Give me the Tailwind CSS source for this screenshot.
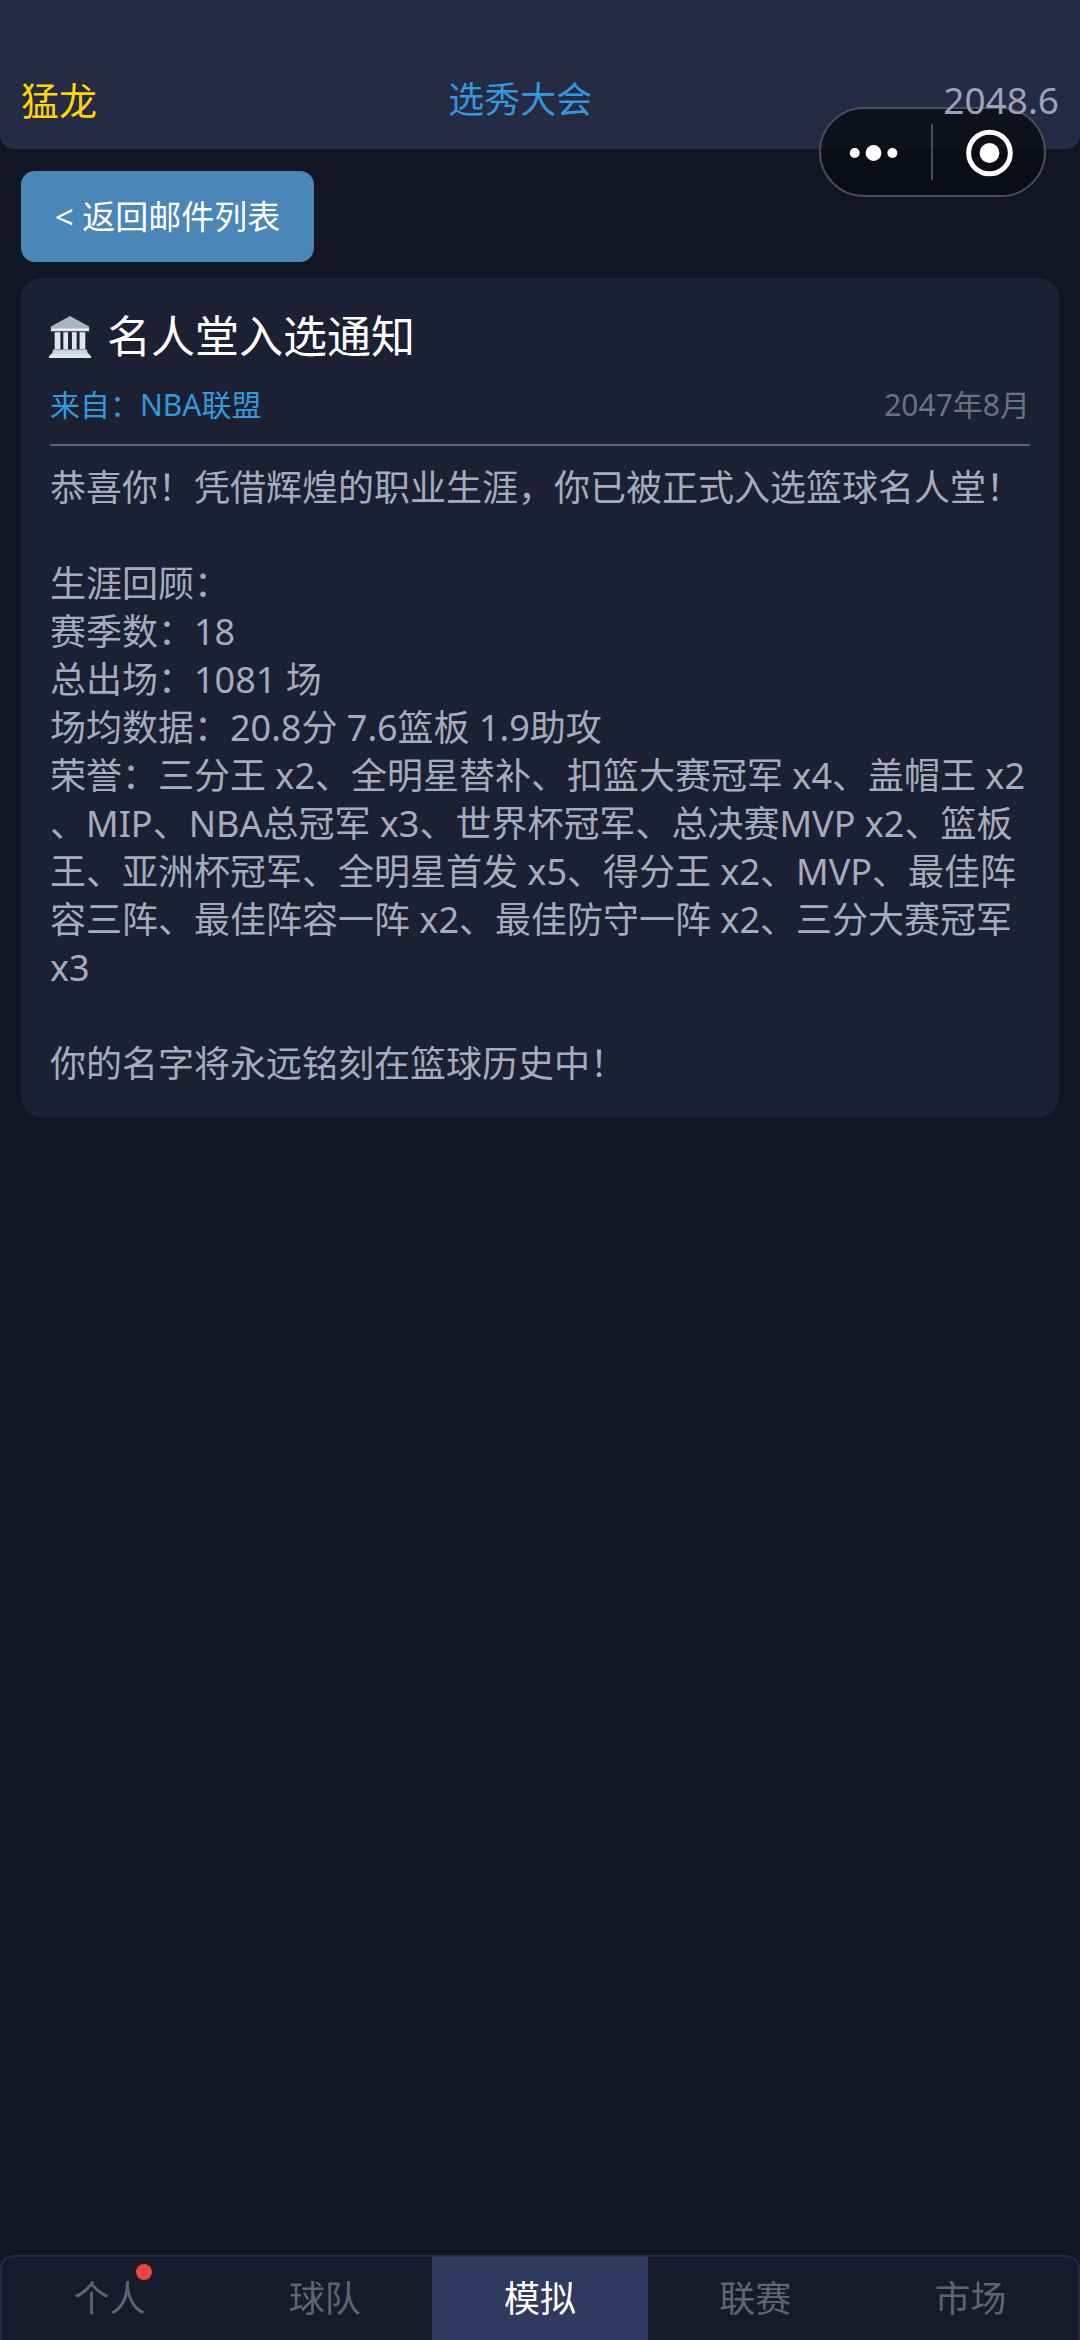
<!doctype html>
<html><head><meta charset="utf-8"><script src="https://cdn.jsdelivr.net/npm/@tailwindcss/browser@4"></script></head>
<body class="m-0 bg-[#111524]">
<div class="relative w-[1080px] h-[2340px] overflow-hidden flex flex-col bg-[#111524] font-['Noto_Sans','Noto_Sans_CJK_SC',sans-serif]">
  <header class="h-[149px] rounded-b-[14px] bg-[#252a45] flex items-end justify-between px-[21px] pb-[25px] text-[36px] leading-[48px]">
    <span class="text-[#ffd700] text-[38px]">猛龙</span>
    <span class="text-[#3498db]">选秀大会</span>
    <span class="relative z-10 text-[#9ca3bb] text-[37px]">2048.6</span>
  </header>
  <div class="absolute left-[819px] top-[107px] w-[227px] h-[90px] rounded-[45px] bg-[#0a0c14]/85 border-2 border-[#4a4d5a] flex items-center">
    <svg width="111" height="86" viewBox="0 0 111 86"><circle cx="34" cy="44" r="5" fill="#fff"/><circle cx="53" cy="44" r="8" fill="#fff"/><circle cx="72" cy="44" r="5" fill="#fff"/></svg>
    <div class="w-[2px] h-[56px] bg-[#4a4d58]"></div>
    <svg width="112" height="86" viewBox="0 0 112 86"><circle cx="57" cy="44" r="21" fill="none" stroke="#fff" stroke-width="5"/><circle cx="57" cy="44" r="10" fill="#fff"/></svg>
  </div>
  <main class="flex-1 px-[21px] pt-[22px]">
    <button class="block w-[293px] h-[91px] rounded-[14px] bg-[#4a86b8] text-white text-[33px] text-center">&lt; 返回邮件列表</button>
    <article class="mt-[16px] w-[1038px] h-[839px] rounded-[20px] bg-[#1c2033] px-[29px] pt-[27px]">
      <h1 class="text-[44px] leading-[62px] text-white flex items-center gap-[15px]">
        <svg width="44" height="44" viewBox="0 0 46 46" class="shrink-0 mt-[2px] ml-[-2px]">
          <defs><linearGradient id="g" x1="0" y1="0" x2="0" y2="1"><stop offset="0" stop-color="#c3ccd6"/><stop offset="1" stop-color="#e6ebf0"/></linearGradient></defs>
          <path d="M23 1 L43 12 V15 H3 V12 Z" fill="#a9b6c2"/><rect x="3" y="14" width="40" height="3" fill="#e4e9ee"/>
          <rect x="7" y="18" width="6" height="18" fill="#dfe5ea"/><rect x="16" y="18" width="5" height="18" fill="#dfe5ea"/><rect x="25" y="18" width="5" height="18" fill="#dfe5ea"/><rect x="33" y="18" width="6" height="18" fill="#dfe5ea"/>
          <path d="M5 36 H41 V39 L45 43 V45 H1 V43 L5 39 Z" fill="url(#g)"/>
        </svg><span>名人堂入选通知</span></h1>
      <div class="mt-[18px] pb-[19px] border-b-2 border-[#5f6373] flex justify-between text-[30px] leading-[40px]"><span class="text-[#3498db]">来自：NBA联盟</span><span class="text-[#6b7280]">2047年8月</span></div>
      <div class="mt-[18px] text-[36px] leading-[48px] text-[#a5acbd] whitespace-nowrap">
        <p>恭喜你！凭借辉煌的职业生涯，你已被正式入选篮球名人堂！</p><br>
        <p>生涯回顾：</p><p>赛季数：18</p><p>总出场：1081 场</p><p>场均数据：20.8分 7.6篮板 1.9助攻</p>
        <p>荣誉：三分王 x2、全明星替补、扣篮大赛冠军 x4、盖帽王 x2<br>、MIP、NBA总冠军 x3、世界杯冠军、总决赛MVP x2、篮板<br>王、亚洲杯冠军、全明星首发 x5、得分王 x2、MVP、最佳阵<br>容三阵、最佳阵容一阵 x2、最佳防守一阵 x2、三分大赛冠军<br>x3</p><br>
        <p>你的名字将永远铭刻在篮球历史中！</p>
      </div>
    </article>
  </main>
  <nav class="h-[85px] rounded-t-[14px] border-t-2 border-x-2 border-[#252a40] bg-[#161a2a] grid grid-cols-5 text-[36px] text-[#5f6472] text-center items-stretch overflow-hidden">
    <div class="relative flex items-center justify-center">个人<span class="absolute left-[134px] top-[7px] w-[16px] h-[16px] rounded-full bg-[#ef4444]"></span></div>
    <div class="flex items-center justify-center">球队</div>
    <div class="flex items-center justify-center bg-[#303a5e] text-white">模拟</div>
    <div class="flex items-center justify-center">联赛</div>
    <div class="flex items-center justify-center">市场</div>
  </nav>
</div>
</body></html>
